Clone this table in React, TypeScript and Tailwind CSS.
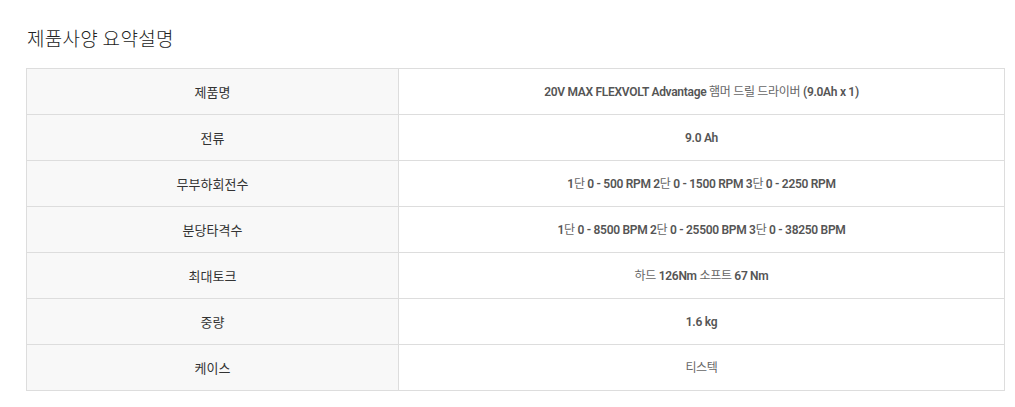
import React from "react";

const specs = [
  { label: "제품명", value: "20V MAX FLEXVOLT Advantage 햄머 드릴 드라이버 (9.0Ah x 1)" },
  { label: "전류", value: "9.0 Ah" },
  { label: "무부하회전수", value: "1단 0 - 500 RPM 2단 0 - 1500 RPM 3단 0 - 2250 RPM" },
  { label: "분당타격수", value: "1단 0 - 8500 BPM 2단 0 - 25500 BPM 3단 0 - 38250 BPM" },
  { label: "최대토크", value: "하드 126Nm 소프트 67 Nm" },
  { label: "중량", value: "1.6 kg" },
  { label: "케이스", value: "티스텍" },
];

// 한글은 가늘게, 영문/숫자는 굵게
function SpecValue({ text }: { text: string }) {
  const parts = text.split(/([가-힣]+)/).filter((p) => p !== "");
  return (
    <>
      {parts.map((p, i) =>
        /[가-힣]/.test(p) ? (
          <span key={i} className="font-normal text-[#666] font-['Noto_Sans_CJK_KR',sans-serif] tracking-[-0.3px]">
            {p}
          </span>
        ) : (
          <span key={i}>{p}</span>
        )
      )}
    </>
  );
}

export default function App() {
  return (
    <div className="bg-white w-[1015px] h-[407px] pl-[26px] pr-[10px] pt-[26px] font-['Noto_Sans','Noto_Sans_CJK_KR',sans-serif]">
      {/* 타이틀 */}
      <h2 className="text-[19px] leading-[24px] text-[#222] font-light pl-[1px] tracking-[0.3px] font-['Noto_Sans_CJK_KR',sans-serif]">
        제품사양 요약설명
      </h2>

      <table className="mt-[18px] w-[979px] border-collapse border border-[#dddddd] table-fixed">
        <colgroup>
          <col className="w-[372px]" />
          <col />
        </colgroup>
        <tbody>
          {specs.map((row) => (
            <tr key={row.label} className="h-[46px]">
              <th className="bg-[#f8f8f8] border border-[#dddddd] text-center text-[13px] font-normal text-[#333] font-['Noto_Sans_CJK_KR',sans-serif]">
                {row.label}
              </th>
              <td className="border border-[#dddddd] text-center text-[12px] font-semibold text-[#555] tracking-[-0.3px] font-['Roboto','Noto_Sans_CJK_KR',sans-serif]">
                <SpecValue text={row.value} />
              </td>
            </tr>
          ))}
        </tbody>
      </table>
    </div>
  );
}
